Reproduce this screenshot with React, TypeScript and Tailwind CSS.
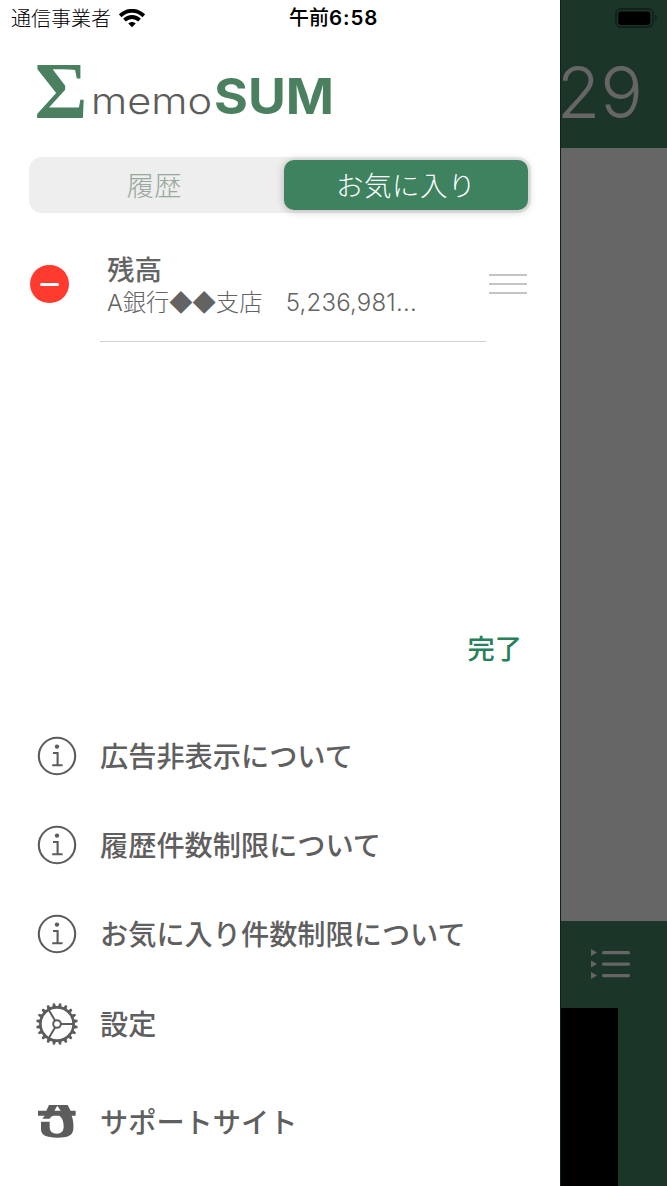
import type { ReactNode } from "react";

interface MenuItem {
  label: string;
  icon: ReactNode;
  row: string;
}

function WifiIcon() {
  return (
    <svg width="26" height="19" viewBox="0 0 26 19" fill="none" stroke="#000" strokeWidth="3.9">
      <path d="M1.2 6.8C8 .2 18 .2 24.8 6.8" />
      <path d="M5.5 11.1c4.3-4.1 10.7-4.1 15 0" />
      <path d="M13 18.3l-3.7-3.7c2.2-2 5.2-2 7.4 0z" fill="#000" stroke="none" />
    </svg>
  );
}

function BatteryIcon() {
  return (
    <svg width="42" height="20" viewBox="0 0 42 20">
      <rect x="1" y="1" width="37" height="18" rx="5" fill="none" stroke="#10221a" strokeWidth="1.8" />
      <rect x="3.3" y="3.5" width="32" height="13.5" rx="3" fill="#000" />
      <path d="M40 6.5c2.2 1 2.2 6 0 7z" fill="#10221a" />
    </svg>
  );
}

function Logo() {
  return (
    <svg width="300" height="64" viewBox="0 0 300 64" className="overflow-visible">
      <text x="-1.5" y="57.7" textLength="53" lengthAdjust="spacingAndGlyphs" fill="#4a8060" className="font-['Liberation_Serif',serif] text-[80px] font-bold">
        Σ
      </text>
      <text x="55" y="53.5" textLength="121" lengthAdjust="spacingAndGlyphs" fill="#5c5c5c" className="font-['Inter',sans-serif] text-[37px] font-light">
        memo
      </text>
      <text x="178" y="54" textLength="120" lengthAdjust="spacingAndGlyphs" fill="#4a8060" className="font-['Inter',sans-serif] text-[49px] font-bold">
        SUM
      </text>
    </svg>
  );
}

function InfoIcon() {
  return (
    <svg width="40" height="40" viewBox="0 0 40 40" fill="none" stroke="#5c5c5c" strokeWidth="2.1">
      <circle cx="20" cy="20" r="18.2" />
      <circle cx="20" cy="10.6" r="2.2" fill="#5c5c5c" stroke="none" />
      <path d="M16 17h4.6v12M15.2 29.2h10.4" />
    </svg>
  );
}

function GearIcon() {
  const teeth = Array.from({ length: 20 }, (_, i) => i * 18 + 9);
  return (
    <svg width="42" height="42" viewBox="0 0 42 42" fill="none" stroke="#5c5c5c" strokeWidth="2">
      <circle cx="21" cy="21" r="16.6" strokeWidth="2.6" />
      <circle cx="21" cy="21" r="3.8" />
      <path d="M25 21h13M19 17.6L12.4 6.2M19 24.4l-6.6 11.4" />
      {teeth.map((angle) => (
        <path key={angle} d="M37.5 18.9L41.8 20v2L37.5 23.1z" fill="#5c5c5c" stroke="none" transform={`rotate(${angle} 21 21)`} />
      ))}
    </svg>
  );
}

function SupportIcon() {
  return (
    <svg width="38" height="33" viewBox="0 0 114 99" fill="#5c5c5c">
      <path
        fillRule="evenodd"
        d="M33 0H89L98 17H113V32H101C106 45 107 58 106 72C104 92 90 98 58 98C25 98 9 91 9 73V50H35V66C35 79 43 86 57 86C70 86 77 79 77 64C77 49 73 38 64 32H46C40 34 37 37 35 41H13L20 32H0V17H25ZM58 2L49 17H68Z"
      />
    </svg>
  );
}

const menuItems: MenuItem[] = [
  { label: "広告非表示について", icon: <InfoIcon />, row: "h-[89px]" },
  { label: "履歴件数制限について", icon: <InfoIcon />, row: "h-[89px]" },
  { label: "お気に入り件数制限について", icon: <InfoIcon />, row: "h-[89px]" },
  { label: "設定", icon: <GearIcon />, row: "h-[92px]" },
  { label: "サポートサイト", icon: <SupportIcon />, row: "h-[103px]" },
];

function Drawer() {
  return (
    <aside className="flex h-full w-[560px] shrink-0 flex-col bg-white">
      <div className="flex h-9 items-center pl-[11px] text-black">
        <span className="w-[108px] text-[20px] font-light">通信事業者</span>
        <WifiIcon />
        <span className="ml-[144px] text-[20px] font-medium whitespace-nowrap">
          午前<span className="font-['Inter',sans-serif] text-[20.5px] font-semibold tracking-[0.9px]">6:58</span>
        </span>
      </div>

      <div className="mt-6 ml-9 h-16">
        <Logo />
      </div>

      <div className="mt-[33px] ml-[29px] grid h-14 w-[502px] grid-cols-[1fr_244px] rounded-[13px] bg-[#eee] p-[3px] text-[27.5px] font-light">
        <button className="flex items-center justify-center pr-2 text-[#98a89d]">履歴</button>
        <button className="flex items-center justify-center rounded-[10px] bg-[#3e825f] tracking-[0.5px] text-white shadow-[0_1px_8px_rgba(0,0,0,0.25)]">
          お気に入り
        </button>
      </div>

      <div className="flex h-[129px] items-center pt-3 pl-[30px]">
        <button className="mt-px flex h-[38px] w-[39px] items-center justify-center rounded-full bg-[#ff3b30]">
          <span className="h-[3px] w-[19px] rounded-sm bg-white" />
        </button>
        <div className="ml-[31px] flex h-[117px] w-[386px] flex-col border-b border-[#d0d0d0] pt-[26px] pl-[7px] text-[#636363]">
          <span className="text-[27.5px] leading-[34px] font-medium">残高</span>
          <span className="text-[23.3px] leading-[32px] font-light whitespace-pre">
            <span className="font-['Inter',sans-serif]">A</span>銀行◆◆支店　<span className="font-['Inter',sans-serif] text-[24px] tracking-[0.2px]">5,236,981...</span>
          </span>
        </div>
        <div className="ml-[3px] flex w-[38px] flex-col gap-[7px]">
          <span className="h-[2px] bg-[#c4c4c6]" />
          <span className="h-[2px] bg-[#c4c4c6]" />
          <span className="h-[2px] bg-[#c4c4c6]" />
        </div>
      </div>

      <button className="mt-[285px] mr-[38px] self-end text-[27.3px] leading-10 font-medium text-[#28805a]">完了</button>

      <nav className="mt-[44px] text-[#5f5f5f]">
        {menuItems.map((item) => (
          <a key={item.label} className={`flex items-center ${item.row}`}>
            <span className="ml-[35px] flex w-[43px] justify-center">{item.icon}</span>
            <span className="ml-[22px] pb-px text-[28.2px] font-medium whitespace-nowrap">{item.label}</span>
          </a>
        ))}
      </nav>
    </aside>
  );
}

function Backdrop() {
  return (
    <main className="flex h-full w-[107px] flex-col overflow-hidden border-l border-[#10221a] bg-[#666]">
      <header className="flex h-[148px] shrink-0 flex-col items-end bg-[#1b3529]">
        <div className="mt-2 mr-[10px]">
          <BatteryIcon />
        </div>
        <div className="mt-[28px] mr-[24px] font-['Inter',sans-serif] text-[71px] leading-[72px] font-[350] text-[#666]">29</div>
      </header>
      <div className="flex-1" />
      <div className="h-[87px] shrink-0 bg-[#1b3529] pt-7 pl-[30px]">
        <svg width="40" height="32" viewBox="0 0 40 32" fill="#666">
          {[3.5, 15, 26.5].map((y) => (
            <g key={y}>
              <path d={`M0 ${y - 3.5}l6 3.5-6 3.5z`} />
              <rect x="11" y={y - 1.5} width="28" height="3.2" rx="1.5" />
            </g>
          ))}
        </svg>
      </div>
      <div className="h-[178px] shrink-0 bg-[#1b3529]">
        <div className="h-full w-[57px] bg-black" />
      </div>
    </main>
  );
}

export default function App() {
  return (
    <div lang="ja" className="flex h-[1186px] w-[667px] overflow-hidden font-['Noto_Sans_CJK_JP',sans-serif]">
      <Drawer />
      <Backdrop />
    </div>
  );
}
